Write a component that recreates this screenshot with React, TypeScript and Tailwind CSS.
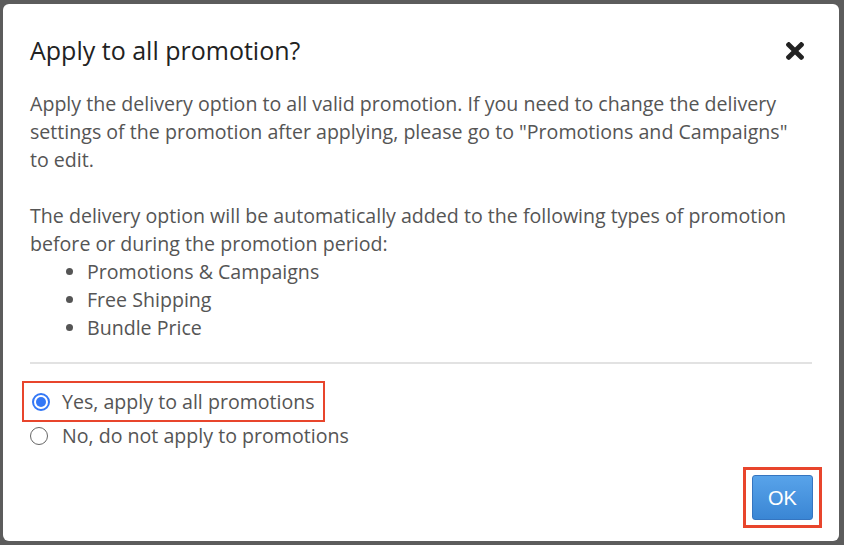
import React from "react";

function Radio({ checked }: { checked?: boolean }) {
  return checked ? (
    <span className="flex h-[18px] w-[18px] items-center justify-center rounded-full border-2 border-[#3478f6] bg-white">
      <span className="h-[10px] w-[10px] rounded-full bg-[#3478f6]" />
    </span>
  ) : (
    <span className="h-[18px] w-[18px] rounded-full border border-[#666] bg-white" />
  );
}

export default function App() {
  const font = { fontFamily: '"Open Sans", sans-serif' };
  return (
    <div className="h-[545px] w-[844px] bg-[#5c5c5c] pl-[3px] pr-[5px] pt-[4px] pb-[4px]" style={font}>
      <div className="flex h-full w-full flex-col rounded-[6px] bg-white">
        <div className="flex items-center justify-between pl-[27px] pr-[35px] pt-[30px]">
          <h1 className="text-[25px] leading-[32px] text-[#222]">Apply to all promotion?</h1>
          <svg width="18" height="18" viewBox="0 80 352 352" className="mt-[2px]">
            <path
              fill="#222"
              d="M242.72 256l100.07-100.07c12.28-12.28 12.28-32.19 0-44.48l-22.24-22.24c-12.28-12.28-32.19-12.28-44.48 0L176 189.28 75.930 89.21c-12.28-12.28-32.19-12.28-44.48 0L9.21 111.45c-12.28 12.28-12.28 32.19 0 44.48L109.28 256 9.21 356.07c-12.28 12.28-12.28 32.19 0 44.48l22.24 22.24c12.28 12.28 32.2 12.28 44.48 0L176 322.72l100.07 100.07c12.28 12.28 32.2 12.28 44.48 0l22.24-22.24c12.28-12.28 12.28-32.19 0-44.48L242.72 256z"
            />
          </svg>
        </div>
        <div className="pl-[27px] pr-[27px] pt-[24px] text-[19.6px] leading-[28px] text-[#555]">
          <p>
            Apply the delivery option to all valid promotion. If you need to change the delivery
            <br />
            settings of the promotion after applying, please go to "Promotions and Campaigns"
            <br />
            to edit.
          </p>
          <p className="mt-[28px]">
            The delivery option will be automatically added to the following types of promotion
            <br />
            before or during the promotion period:
          </p>
          <ul className="list-disc pl-[57px]">
            <li>Promotions &amp; Campaigns</li>
            <li>Free Shipping</li>
            <li>Bundle Price</li>
          </ul>
          <div className="mt-[20px] h-[2px] bg-[#e2e2e2]" />
          <div className="mt-[17px] flex flex-col">
            <div className="flex">
              <div className="-ml-[8px] flex items-center gap-[12px] border-2 border-[#e8452c] py-[5px] pl-[8px] pr-[8px]">
                <Radio checked />
                <span className="leading-[27px]">Yes, apply to all promotions</span>
              </div>
            </div>
            <div className="flex items-center gap-[14px]">
              <Radio />
              <span className="leading-[28px]">No, do not apply to promotions</span>
            </div>
          </div>
        </div>
        <div className="mt-auto flex justify-end pb-[13px] pr-[17px]">
          <div className="border-[3px] border-[#e8452c] px-[6px] py-[5px]">
            <button
              className="h-[45px] w-[61px] rounded-[3px] border border-[#3575c0] bg-gradient-to-b from-[#58a3ea] to-[#3a86d4] text-[20px] text-white"
              style={{ fontFamily: '"Liberation Sans", Arial, sans-serif' }}
            >
              OK
            </button>
          </div>
        </div>
      </div>
    </div>
  );
}
